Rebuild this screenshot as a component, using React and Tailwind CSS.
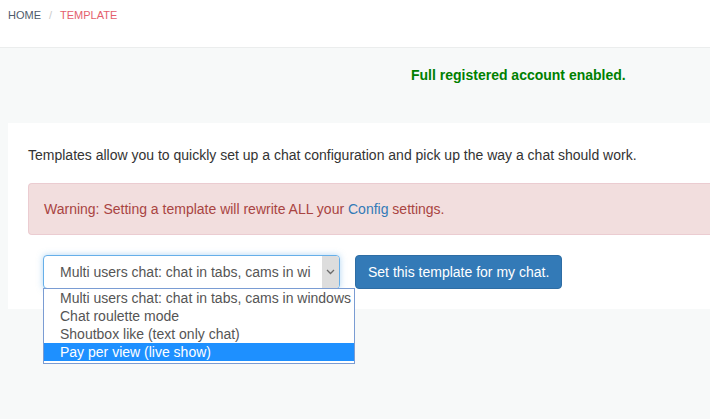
export default function App() {
  const options = [
    "Multi users chat: chat in tabs, cams in windows",
    "Chat roulette mode",
    "Shoutbox like (text only chat)",
    "Pay per view (live show)",
  ];
  return (
    <div className="min-h-screen w-full overflow-hidden bg-[#f7f9f9]" style={{ fontFamily: '"Liberation Sans", Arial, sans-serif' }}>
      <div className="h-[48px] bg-white border-b border-[#ebeded] flex items-start pt-[8px] pl-[8px] text-[11px] leading-[14px]">
        <span className="text-[#4f5b6b]">HOME</span>
        <span className="text-[#cccccc] px-[8px]">/</span>
        <span className="text-[#e4606d]">TEMPLATE</span>
      </div>
      <div className="h-[75px] pl-[411px] pt-[15px]">
        <span className="text-[14px] leading-[18px] font-bold text-[#008000]">Full registered account enabled.</span>
      </div>
      <div className="ml-[8px] bg-white h-[186px] pl-[20px] pt-[22px]">
        <p className="text-[14px] text-[#333333] leading-[20px]">Templates allow you to quickly set up a chat configuration and pick up the way a chat should work.</p>
        <div className="mt-[18px] h-[52px] bg-[#f2dede] border border-[#ebccd1] rounded-l-[4px] border-r-0 flex items-center pl-[15px] text-[14px] text-[#a94442]">
          <span>Warning: Setting a template will rewrite ALL your <span className="text-[#337ab7]">Config</span> settings.</span>
        </div>
        <div className="mt-[20px] ml-[15px] flex items-start gap-[15px]">
          <div className="relative">
            <div className="w-[297px] h-[34px] bg-white border border-[#66afe9] rounded-[4px] shadow-[0_0_6px_rgba(102,175,233,0.5)] flex items-center overflow-hidden">
              <span className="flex-1 pl-[16px] text-[14px] text-[#555555] whitespace-nowrap overflow-hidden">Multi users chat: chat in tabs, cams in wi</span>
              <span className="w-[17px] h-full bg-[#dddddd] flex items-center justify-center">
                <svg width="9" height="6" viewBox="0 0 9 6"><path d="M1 1 L4.5 4.5 L8 1" fill="none" stroke="#6b6b6b" strokeWidth="1.3" /></svg>
              </span>
            </div>
            <div className="absolute left-0 top-[33px] w-[312px] bg-white border border-[#7a9cd3] z-10 pb-[2px]">
              {options.map((o, i) => (
                <div key={o} className={`h-[18px] leading-[18px] pl-[16px] text-[14px] whitespace-nowrap ${i === 3 ? "bg-[#1e90ff] text-white" : "text-[#555555]"}`}>{o}</div>
              ))}
            </div>
          </div>
          <button className="h-[34px] px-[12px] bg-[#337ab7] border border-[#2e6da4] rounded-[4px] text-white text-[14px]">Set this template for my chat.</button>
        </div>
      </div>
    </div>
  );
}
